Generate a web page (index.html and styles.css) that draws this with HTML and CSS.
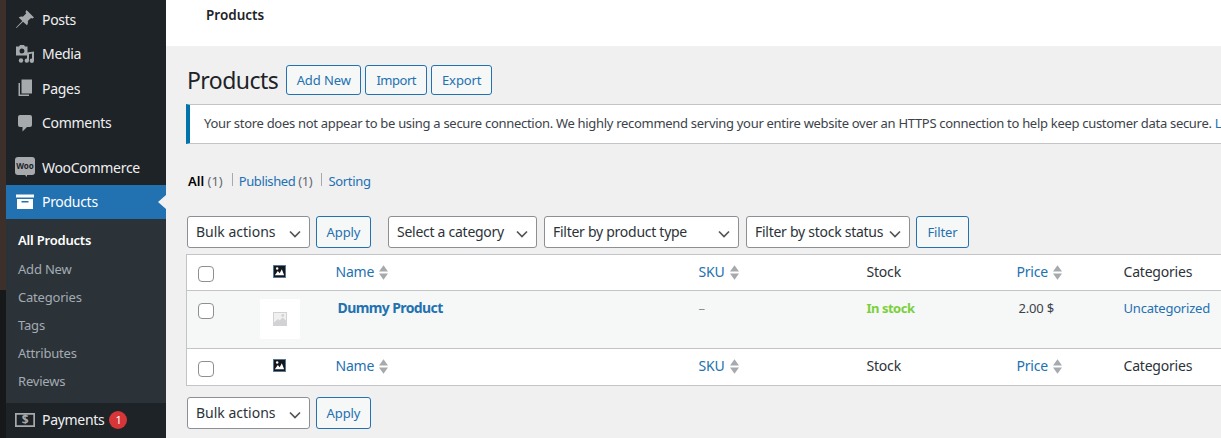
FILE: index.html
```html
<!DOCTYPE html>
<html lang="en">
<head>
  <meta charset="UTF-8" />
  <title>Products</title>
  <meta name="viewport" content="width=device-width, initial-scale=1.0" />
  <link rel="stylesheet" href="styles.css">
</head>
<body>

<div id="wrap">
  <div id="strip"></div>

  <div id="menu">
    <a class="item first">
      <svg class="ico" viewBox="0 0 20 20"><path d="M11.500 1l7.500 7.500-1.700 1-1.300-.6-3.200 3.200c.4 1.500.1 3-.8 4.100L8 12.700 1.500 19 1 18.500 7.300 12 3.800 8.500c1.100-.9 2.600-1.200 4.100-.8l3.200-3.200-.6-1.400z"/></svg>
      Posts
    </a>
    <a class="item">
      <svg class="ico" viewBox="0 0 20 20"><path d="M1 2.500h3l1-1.500h4l1 1.500h2.500v9H1zm6 2a2.500 2.500 0 1 0 0 5 2.500 2.500 0 0 0 0-5z" fill-rule="evenodd"/><path d="M19 7.500v9.200a2.200 2.200 0 1 1-2-2.200v-5l-3 .7v6.300a2.200 2.200 0 1 1-2-2.100v-6z"/><circle cx="6" cy="16.500" r="2.200"/></svg>
      Media
    </a>
    <a class="item">
      <svg class="ico" viewBox="0 0 20 20"><path d="M6.500 1.500H17v14H6.500z"/><path d="M3.500 5H5v11.500h9V18H3.500z"/></svg>
      Pages
    </a>
    <a class="item">
      <svg class="ico" viewBox="0 0 20 20"><path d="M5 2h10a2 2 0 0 1 2 2v8a2 2 0 0 1-2 2h-3l-4.500 4.500V14H5a2 2 0 0 1-2-2V4a2 2 0 0 1 2-2z"/></svg>
      Comments
    </a>
    <a class="item woo">
      <span class="woo-logo">Woo</span>
      WooCommerce
    </a>
    <a class="item active">
      <svg class="ico" viewBox="0 0 20 20"><path d="M1 2.500h18v3H1zM2 7h16v10H2zm4.500 2v1.500h7V9z" fill-rule="evenodd"/></svg>
      Products
    </a>
    <div class="submenu">
      <a class="current">All Products</a>
      <a>Add New</a>
      <a>Categories</a>
      <a>Tags</a>
      <a>Attributes</a>
      <a>Reviews</a>
    </div>
    <a class="item pay">
      <svg class="ico" viewBox="0 0 20 20"><path d="M0 3h20v14H0zm1.700 1.700v10.600h16.600V4.700z" fill-rule="evenodd"/><text x="10" y="14.200" text-anchor="middle" class="dollar">$</text></svg>
      Payments <span class="count">1</span>
    </a>
  </div>

  <div id="main">
    <div id="topbar">Products</div>

    <div id="content">
      <div class="heading">
        <h1>Products</h1>
        <a class="btn add">Add New</a>
        <a class="btn imp">Import</a>
        <a class="btn exp">Export</a>
      </div>

      <div class="notice">Your store does not appear to be using a secure connection. We highly recommend serving your entire website over an HTTPS connection to help keep customer data secure. <a>Learn more</a></div>

      <ul class="subsub">
        <li class="all"><b>All</b> <span>(1)</span></li>
        <li><a>Published</a> <span>(1)</span></li>
        <li class="sorting"><a>Sorting</a></li>
      </ul>

      <div class="tablenav">
        <select class="w-bulk"><option>Bulk actions</option></select>
        <button class="btn tall apply">Apply</button>
        <select class="w-cat"><option>Select a category</option></select>
        <select class="w-type"><option>Filter by product type</option></select>
        <select class="w-stock"><option>Filter by stock status</option></select>
        <button class="btn tall filter">Filter</button>
      </div>

      <table class="list">
        <colgroup>
          <col class="c-check"><col class="c-thumb"><col class="c-name"><col class="c-sku"><col class="c-stock"><col class="c-price"><col class="c-cat">
        </colgroup>
        <thead>
          <tr>
            <th><span class="cb"></span></th>
            <th class="thumb"><svg class="img-ico" viewBox="0 0 14 14"><rect width="14" height="14" fill="#5f7f9f"/><rect x="1" y="1" width="12" height="12" fill="#14181c"/><path d="M2 11l3.200-4.500 2 2.500 2.300-4.500L12 11z" fill="#fff"/><circle cx="4.500" cy="3.800" r="1.300" fill="#fff"/></svg></th>
            <th class="name"><a>Name</a><svg class="sort" viewBox="0 0 10 16"><path d="M5 0l5 7H0zM5 16l5-7H0z"/></svg></th>
            <th><a>SKU</a><svg class="sort" viewBox="0 0 10 16"><path d="M5 0l5 7H0zM5 16l5-7H0z"/></svg></th>
            <th>Stock</th>
            <th><a>Price</a><svg class="sort" viewBox="0 0 10 16"><path d="M5 0l5 7H0zM5 16l5-7H0z"/></svg></th>
            <th>Categories</th>
          </tr>
        </thead>
        <tbody>
          <tr>
            <td class="check-cell"><span class="cb"></span></td>
            <td class="thumb-cell"><span class="placeholder"><svg viewBox="0 0 14 14"><path d="M0 0h14v14H0z" fill="#d2d2d4"/><path d="M1 1h12v7.500L9.500 5.500 6.800 8.500 5 7 1 10.500z" fill="#f0f0f1"/><circle cx="9.800" cy="3.500" r="1.400" fill="#d2d2d4"/></svg></span></td>
            <td class="name-cell"><a>Dummy Product</a></td>
            <td class="sku-cell">–</td>
            <td class="stock-cell">In stock</td>
            <td class="price-cell">2.00 $</td>
            <td class="cat-cell"><a>Uncategorized</a></td>
          </tr>
        </tbody>
        <tfoot>
          <tr>
            <th><span class="cb"></span></th>
            <th class="thumb"><svg class="img-ico" viewBox="0 0 14 14"><rect width="14" height="14" fill="#5f7f9f"/><rect x="1" y="1" width="12" height="12" fill="#14181c"/><path d="M2 11l3.200-4.500 2 2.500 2.300-4.500L12 11z" fill="#fff"/><circle cx="4.500" cy="3.800" r="1.300" fill="#fff"/></svg></th>
            <th class="name"><a>Name</a><svg class="sort" viewBox="0 0 10 16"><path d="M5 0l5 7H0zM5 16l5-7H0z"/></svg></th>
            <th><a>SKU</a><svg class="sort" viewBox="0 0 10 16"><path d="M5 0l5 7H0zM5 16l5-7H0z"/></svg></th>
            <th>Stock</th>
            <th><a>Price</a><svg class="sort" viewBox="0 0 10 16"><path d="M5 0l5 7H0zM5 16l5-7H0z"/></svg></th>
            <th>Categories</th>
          </tr>
        </tfoot>
      </table>

      <div class="tablenav bottom">
        <select class="w-bulk"><option>Bulk actions</option></select>
        <button class="btn tall apply">Apply</button>
      </div>
    </div>
  </div>
</div>

</body>
</html>
```

FILE: styles.css
```css
html, body {
  margin: 0;
  height: 438px;
  overflow: hidden;
}

body {
  font-family: "Noto Sans", sans-serif;
  font-size: 13px;
  color: #3c434a;
  background: #f0f0f1;
}

a {
  color: #2271b1;
  text-decoration: none;
}

#wrap {
  display: flex;
  height: 438px;
}

#strip {
  flex: 0 0 6px;
  background: linear-gradient(#3d2f29 0, #3d2f29 290px, #17181a 290px);
}

/* sidebar */
#menu {
  flex: 0 0 160px;
  background: #1d2327;
  overflow: hidden;
}

.item {
  display: flex;
  align-items: center;
  height: 34.500px;
  padding-left: 9px;
  font-size: 14px;
  letter-spacing: -0.3px;
  color: #f0f0f1;
}

.item.first {
  margin-top: 2px;
}

.item.woo {
  margin-top: 10px;
}

.ico {
  width: 20px;
  height: 20px;
  margin-right: 7px;
  fill: #a7aaad;
  flex: none;
}

.woo-logo {
  position: relative;
  width: 20px;
  height: 18px;
  margin: -2px 7px 0 0;
  border-radius: 3px;
  background: #a7aaad;
  color: #1d2327;
  font-size: 8px;
  font-weight: 700;
  letter-spacing: 0;
  line-height: 17px;
  text-align: center;
  flex: none;
}

.woo-logo::after {
  content: "";
  position: absolute;
  left: 10px;
  bottom: -2px;
  border-top: 2px solid #a7aaad;
  border-left: 2px solid transparent;
}

.item.active {
  position: relative;
  height: 34px;
  background: #2271b1;
  color: #fff;
}

.item.active .ico {
  fill: #fff;
}

.item.active::after {
  content: "";
  position: absolute;
  right: 0;
  top: 10px;
  border: 7px solid transparent;
  border-left-width: 0;
  border-right: 8px solid #f0f0f1;
}

.submenu {
  height: 184px;
  padding: 7px 0 0 12px;
  box-sizing: border-box;
  background: #2c3338;
}

.submenu a {
  display: block;
  height: 28px;
  line-height: 28px;
  font-size: 13px;
  letter-spacing: -0.2px;
  color: #a3abb3;
}

.submenu a.current {
  height: 29px;
  color: #fff;
  font-weight: 600;
}

.dollar {
  font-family: "Noto Sans", sans-serif;
  font-size: 12px;
  font-weight: 700;
  fill: #a7aaad;
}

.count {
  display: inline-block;
  width: 18px;
  height: 18px;
  margin-left: 5px;
  border-radius: 50%;
  background: #d63638;
  color: #fff;
  font-size: 11px;
  line-height: 18px;
  text-align: center;
}

/* main column */
#main {
  flex: 1;
  min-width: 0;
  overflow: hidden;
}

#topbar {
  height: 46px;
  padding: 6px 0 0 40px;
  box-sizing: border-box;
  background: #fff;
  color: #1d2327;
  font-size: 13.500px;
  font-weight: 600;
  line-height: 18px;
}

#content {
  padding: 19px 0 0 20px;
  width: 1300px;
}

.heading {
  display: flex;
  align-items: center;
  gap: 4px;
  height: 30px;
}

.heading h1 {
  margin: 0 4px 0 1px;
  font-size: 23px;
  font-weight: 400;
  letter-spacing: -0.55px;
  color: #1d2327;
}

.btn {
  display: inline-block;
  box-sizing: border-box;
  height: 30px;
  padding: 0;
  border: 1px solid #2271b1;
  border-radius: 3px;
  background: #f6f7f7;
  color: #2271b1;
  font-family: inherit;
  font-size: 13px;
  letter-spacing: -0.1px;
  line-height: 28px;
  text-align: center;
}

.btn.add { width: 75px; }
.btn.imp { width: 62px; letter-spacing: -0.5px; }
.btn.exp { width: 61px; }

.btn.tall {
  height: 32px;
  line-height: 30px;
}

.btn.apply { width: 55px; }
.btn.filter { width: 53px; }

.notice {
  box-sizing: border-box;
  height: 40px;
  margin-top: 9px;
  padding: 0 0 0 14px;
  border: 1px solid #c3c4c7;
  border-left: 4px solid #0073aa;
  background: #fff;
  letter-spacing: -0.3px;
  line-height: 36px;
  white-space: nowrap;
}

.subsub {
  display: flex;
  margin: 28px 0 0 2px;
  padding: 0;
  height: 18px;
  list-style: none;
  line-height: 18px;
  letter-spacing: -0.4px;
  color: #646970;
}

.subsub li.all {
  letter-spacing: 0;
}

.subsub li.sorting {
  letter-spacing: -0.3px;
}

.subsub li + li {
  margin-left: 9px;
  padding-left: 7px;
  position: relative;
}

.subsub li + li::before {
  content: "";
  position: absolute;
  left: 0;
  top: 1px;
  height: 13px;
  border-left: 1px solid #a7aaad;
}

.subsub b {
  color: #000;
  font-weight: 600;
}

.tablenav {
  display: flex;
  gap: 6px;
  margin: 26px 0 6px 1px;
}

.tablenav.bottom {
  margin-top: 11px;
}

select {
  box-sizing: border-box;
  height: 32px;
  padding: 0 0 2px 8px;
  border: 1px solid #8c8f94;
  border-radius: 3px;
  background: #fff url("data:image/svg+xml;utf8,<svg xmlns='http://www.w3.org/2000/svg' width='16' height='16'><path d='M3 5.500L8 10.500l5-5' fill='none' stroke='%23555' stroke-width='1.700'/></svg>") no-repeat right 6px top 9px / 16px 16px;
  color: #2c3338;
  font-family: inherit;
  font-size: 14px;
  letter-spacing: -0.27px;
  appearance: none;
}

.w-bulk { width: 123px; letter-spacing: 0; }
.w-cat { width: 149px; margin-left: 11px; }
.w-type { width: 195px; margin-left: 1px; }
.w-stock { width: 164px; margin-left: 1px; }

/* table */
.list {
  table-layout: fixed;
  border-collapse: collapse;
  width: 1200px;
  background: #fff;
  border: 1px solid #c3c4c7;
}

.c-check { width: 53px; }
.c-thumb { width: 80px; }
.c-name { width: 369px; }
.c-sku { width: 168px; }
.c-stock { width: 150px; }
.c-price { width: 107px; }

.list th {
  height: 37px;
  padding: 0 0 3px 10px;
  box-sizing: border-box;
  font-weight: 400;
  font-size: 14px;
  letter-spacing: -0.2px;
  color: #2c3338;
  text-align: left;
  vertical-align: middle;
}

.list thead th {
  height: 36px;
  border-bottom: 1px solid #c3c4c7;
}

.list tfoot th {
  border-top: 1px solid #c3c4c7;
}

.list th.thumb {
  padding: 0;
  text-align: center;
}

.list th.name {
  padding-left: 16px;
}

.list tbody tr {
  background: #f6f7f7;
}

.list td {
  height: 58px;
  padding: 8px 0 0 10px;
  box-sizing: border-box;
  vertical-align: top;
  letter-spacing: -0.2px;
}

.list td.thumb-cell {
  padding: 0;
  vertical-align: top;
  text-align: center;
}

.cb {
  display: block;
  box-sizing: border-box;
  width: 16px;
  height: 16px;
  margin-left: 1px;
  position: relative;
  top: 3px;
  border: 1px solid #8c8f94;
  border-radius: 4px;
  background: #fff;
}

.check-cell .cb {
  top: 0;
  margin-top: 4px;
}

.img-ico {
  width: 13px;
  height: 13px;
  display: block;
  margin: -3px auto 0;
}

.sort {
  width: 9px;
  height: 15px;
  margin-left: 5px;
  vertical-align: -3px;
  fill: #a7aaad;
}

.placeholder {
  display: block;
  width: 40px;
  height: 40px;
  margin: 8px 0 0 20px;
  padding: 13px;
  box-sizing: border-box;
  background: #fff;
}

.placeholder svg {
  display: block;
  width: 14px;
  height: 14px;
}

.name-cell {
  padding-left: 18px !important;
}

.name-cell a {
  font-size: 14px;
  font-weight: 700;
  letter-spacing: -0.6px;
  line-height: 18px;
}

.sku-cell {
  color: #8c8f94;
}

.stock-cell {
  color: #7ad03a;
  font-weight: 700;
  letter-spacing: -0.5px !important;
}

.price-cell {
  padding-left: 12px !important;
}
```
